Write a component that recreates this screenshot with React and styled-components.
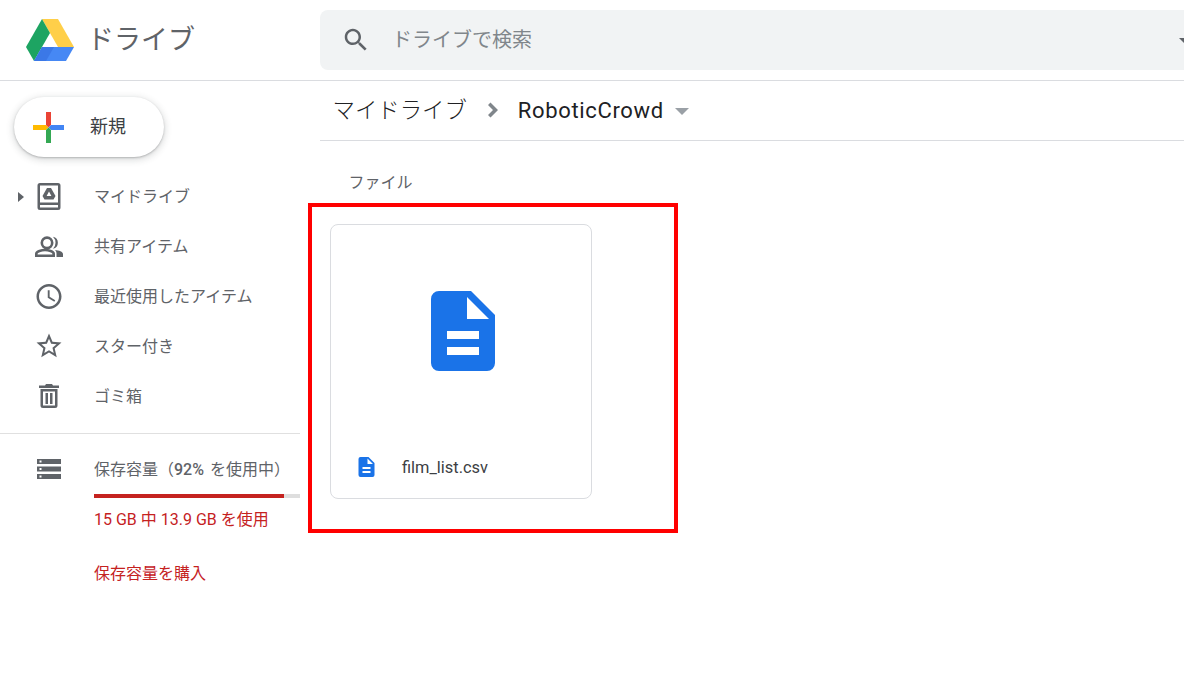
import React from "react";
import styled, { createGlobalStyle } from "styled-components";

const GlobalStyle = createGlobalStyle`
  html, body {
    margin: 0;
    height: 100%;
    background: #fff;
    overflow: hidden;
  }
  body {
    font-family: Roboto, "Noto Sans CJK JP", sans-serif;
    color: #5f6368;
  }
  * { box-sizing: border-box; }
`;

const Page = styled.div`
  width: 1184px;
  height: 674px;
  overflow: hidden;
  display: flex;
  flex-direction: column;
`;

const Header = styled.header`
  display: flex;
  height: 81px;
  flex: none;
  padding-top: 10px;
  border-bottom: 1px solid #dadce0;
`;

const Brand = styled.div`
  width: 320px;
  flex: none;
  display: flex;
  align-items: center;
  height: 60px;
  padding-left: 26px;
  gap: 13px;
`;

const BrandName = styled.span`
  font-size: 27px;
  font-weight: 400;
  color: #5f6368;
  margin-bottom: 5px;
`;

const SearchBar = styled.div`
  flex: 1;
  height: 60px;
  display: flex;
  align-items: center;
  padding-left: 21px;
  gap: 21px;
  background: #f1f3f4;
  border-radius: 8px 0 0 8px;
`;

const SearchHint = styled.span`
  font-size: 20px;
  font-weight: 400;
  color: #80868b;
  margin-bottom: 3px;
`;

const SearchCaret = styled.i`
  margin-left: auto;
  margin-right: -5px;
  width: 0;
  height: 0;
  border-left: 5px solid transparent;
  border-right: 5px solid transparent;
  border-top: 5px solid #5f6368;
`;

const Body = styled.div`
  flex: 1;
  display: flex;
  min-height: 0;
`;

const Sidebar = styled.aside`
  width: 320px;
  flex: none;
  display: flex;
  flex-direction: column;
  align-items: flex-start;
  padding-top: 16px;
`;

const NewButton = styled.button`
  margin-left: 14px;
  margin-bottom: 14px;
  width: 150px;
  height: 60px;
  border: 0;
  border-radius: 30px;
  background: #fff;
  box-shadow: 0 1px 2px 0 rgba(60, 64, 67, 0.3), 0 2px 6px 2px rgba(60, 64, 67, 0.15);
  display: flex;
  align-items: center;
  padding: 0 0 0 19px;
  gap: 26px;
  font-family: inherit;
  font-size: 18px;
  font-weight: 400;
  color: #3c4043;
`;

const NewLabel = styled.span`
  margin-bottom: 4px;
`;

const NavList = styled.nav`
  width: 300px;
`;

const NavRow = styled.div`
  height: 50px;
  display: flex;
  align-items: center;
  font-size: 16px;
  font-weight: 400;
  color: #5f6368;
`;

const NavLabel = styled.span`
  margin-bottom: 2px;
`;

const CaretSlot = styled.span`
  width: 34px;
  flex: none;
  padding-left: 18px;
  display: flex;
`;

const ExpandCaret = styled.i`
  width: 0;
  height: 0;
  margin-top: 2px;
  border-top: 5px solid transparent;
  border-bottom: 5px solid transparent;
  border-left: 6px solid #5f6368;
`;

const IconBox = styled.span`
  width: 30px;
  height: ${(p) => p.$height || 30}px;
  flex: none;
  margin-right: 30px;
  display: flex;
  align-items: center;
  justify-content: center;
`;

const Divider = styled.hr`
  width: 300px;
  height: 1px;
  margin: 12px 0 0;
  border: 0;
  background: #e0e0e0;
`;

const Storage = styled.div`
  width: 300px;
  padding: 25px 0 0 34px;
  display: flex;
`;

const StorageInfo = styled.div`
  flex: 1;
  display: flex;
  flex-direction: column;
`;

const StorageTitle = styled.div`
  font-size: 16px;
  line-height: 22px;
  font-weight: 400;
  color: #5f6368;
  white-space: nowrap;
  word-spacing: 2px;

  b {
    font-weight: 500;
  }
`;

const Track = styled.div`
  height: 4px;
  margin-top: 13px;
  background: #dedede;
`;

const TrackFill = styled.div`
  height: 100%;
  background: #c5221f;
`;

const RedText = styled.div`
  font-size: 16px;
  line-height: 20px;
  font-weight: 400;
  color: #c5221f;
  white-space: nowrap;
  margin-top: ${(p) => p.$top}px;
`;

const Main = styled.main`
  flex: 1;
  min-width: 0;
  display: flex;
  flex-direction: column;
  align-items: flex-start;
`;

const Breadcrumb = styled.div`
  align-self: stretch;
  height: 60px;
  flex: none;
  display: flex;
  align-items: center;
  padding: 0 0 1px 12.500px;
  border-bottom: 1px solid #dadce0;
`;

const CrumbRoot = styled.span`
  font-size: 22.4px;
  font-weight: 300;
  color: #202124;
  margin-bottom: 4px;
`;

const CrumbCurrent = styled.span`
  font-size: 22px;
  color: #202124;
  letter-spacing: 0.65px;
`;

const CrumbCaret = styled.i`
  width: 0;
  height: 0;
  margin-left: 11px;
  margin-top: 2px;
  border-left: 7px solid transparent;
  border-right: 7px solid transparent;
  border-top: 7px solid #9aa0a6;
`;

const SectionLabel = styled.div`
  margin: 32px 0 0 28.500px;
  font-size: 16px;
  line-height: 20px;
  font-weight: 400;
  color: #5f6368;
`;

const HighlightFrame = styled.section`
  width: 370px;
  height: 330px;
  margin: 10px 0 0 -12px;
  padding: 17px 0 0 18px;
  border: 4px solid #f00;
`;

const FileCard = styled.article`
  width: 262px;
  height: 275px;
  border: 1px solid #dadce0;
  border-radius: 8px;
  display: flex;
  flex-direction: column;
`;

const Preview = styled.div`
  flex: 1;
  display: flex;
  justify-content: center;
  padding: 66px 0 0 4px;
`;

const FileRow = styled.div`
  height: 60px;
  flex: none;
  display: flex;
  align-items: center;
  padding: 0 0 3px 27px;
  gap: 27px;
  font-size: 16.4px;
  color: #3c4043;
`;

const FileName = styled.span`
  margin-top: 2px;
`;

const ChevronSvg = styled.svg`
  width: 30px;
  height: 30px;
  margin: 0 10px 0 11px;
  fill: #80868b;
`;

const DocIcon = ({ width, height }) => (
  <svg width={width} height={height} viewBox="0 0 64 80">
    <path
      fillRule="evenodd"
      fill="#1a73e8"
      d="M8 0h32l24 24v48a8 8 0 0 1-8 8H8a8 8 0 0 1-8-8V8a8 8 0 0 1 8-8zM36 6v22h22zM16 40v8h32v-8zM16 56v8h32v-8z"
    />
  </svg>
);

const DriveLogo = () => (
  <svg width="48" height="42" viewBox="26 19 48 42">
    <path fill="#ffcf49" d="M42 19h16l16 28H58z" />
    <path fill="#1da462" d="M42 19l8 14-16 28-8-14z" />
    <path fill="#4688f4" d="M42 47h32l-8 14H34z" />
    <path fill="#3b78e7" d="M42 47l-8 14h12l8-14z" />
  </svg>
);

const PlusIcon = () => (
  <svg width="31" height="31" viewBox="0 0 31 31">
    <path fill="#ffba00" d="M0 13h13l2.500 2.500L13 18H0z" />
    <path fill="#ea4335" d="M13 0h5v13l-2.500 2.500L13 13z" />
    <path fill="#4285f4" d="M18 13h13v5H18l-2.500-2.500z" />
    <path fill="#34a853" d="M13 18l2.500-2.500L18 18v13h-5z" />
  </svg>
);

const SearchIcon = () => (
  <svg width="30" height="30" viewBox="0 0 24 24" fill="#5f6368">
    <path d="M15.500 14h-.79l-.28-.27C15.410 12.590 16 11.110 16 9.500 16 5.910 13.090 3 9.500 3S3 5.910 3 9.500 5.910 16 9.500 16c1.610 0 3.090-.59 4.230-1.570l.27.28v.79l5 4.990L20.490 19l-4.990-5zm-6 0C7.010 14 5 11.990 5 9.500S7.010 5 9.500 5 14 7.010 14 9.500 11.990 14 9.500 14z" />
  </svg>
);

const ChevronIcon = () => (
  <ChevronSvg viewBox="0 0 24 24">
    <path d="M10 6L8 8l4 4-4 4 2 2 6-6z" />
  </ChevronSvg>
);

const MyDriveIcon = () => (
  <svg width="24" height="27" viewBox="0 0 24 27" fill="#5f6368">
    <path
      fillRule="evenodd"
      d="M3 0h18a2.500 2.500 0 0 1 2.500 2.500v22A2.500 2.500 0 0 1 21 27H3a2.500 2.500 0 0 1-2.500-2.500v-22A2.500 2.500 0 0 1 3 0zM3 2.500v17h18v-17zM3 22v2.500h18V22z"
    />
    <path d="M10 5h4l4.500 8-2 3.500H7.500L5.500 13zM12 8.500L9.600 13h4.800z" fillRule="evenodd" />
  </svg>
);

const SharedIcon = () => (
  <svg width="28" height="21" viewBox="0 0 28 21" fill="#5f6368">
    <circle cx="12" cy="6.800" r="5.200" fill="none" stroke="#5f6368" strokeWidth="2.600" />
    <path
      fill="none"
      stroke="#5f6368"
      strokeWidth="2.600"
      d="M1.300 19.700v-2c0-2.500 5.500-3.700 8.700-3.700s8.700 1.200 8.700 3.700v2z"
    />
    <path d="M18 .7a6.200 6.200 0 0 1 0 12.100 8.500 8.500 0 0 0 0-12.100zM20 14.100c4 .4 8 1.800 8 3.900v3h-6.500v-3.400c0-1.400-.6-2.600-1.500-3.500z" />
  </svg>
);

const ClockIcon = () => (
  <svg width="31" height="31" viewBox="0 0 24 24" fill="#5f6368">
    <path d="M11.990 2C6.470 2 2 6.480 2 12s4.470 10 9.990 10C17.520 22 22 17.520 22 12S17.520 2 11.990 2zM12 20c-4.420 0-8-3.580-8-8s3.580-8 8-8 8 3.580 8 8-3.580 8-8 8z" />
    <path d="M12.500 7H11v6l5.250 3.150.75-1.230-4.500-2.670z" />
  </svg>
);

const StarIcon = () => (
  <svg width="30" height="30" viewBox="0 0 24 24" fill="#5f6368">
    <path d="M22 9.240l-7.190-.62L12 2 9.190 8.630 2 9.240l5.460 4.730L5.820 21 12 17.270 18.180 21l-1.630-7.030L22 9.240zM12 15.400l-3.760 2.270 1-4.280-3.320-2.880 4.380-.38L12 6.100l1.710 4.040 4.380.38-3.320 2.880 1 4.280L12 15.400z" />
  </svg>
);

const TrashIcon = () => (
  <svg width="20" height="24" viewBox="0 0 20 24" fill="#5f6368">
    <path d="M7 0h6l1 1.500h6v2.500H0V1.500h6z" />
    <path fillRule="evenodd" d="M1.500 5h17v16.500A2.500 2.500 0 0 1 16 24H4a2.500 2.500 0 0 1-2.500-2.500zM4 7.500v14h12v-14z" />
    <path d="M6.500 9h2.500v11H6.500zM11 9h2.500v11H11z" />
  </svg>
);

const StorageIcon = () => (
  <svg width="24" height="20" viewBox="0 0 24 20" fill="#5f6368">
    <path
      fillRule="evenodd"
      d="M0 0h24v5H0zM2.500 1.500v2h2v-2zM0 7.500h24v5H0zM2.500 9v2h2V9zM0 15h24v5H0zM2.500 16.500v2h2v-2z"
    />
  </svg>
);

const navItems = [
  { label: "マイドライブ", Icon: MyDriveIcon, expandable: true },
  { label: "共有アイテム", Icon: SharedIcon },
  { label: "最近使用したアイテム", Icon: ClockIcon },
  { label: "スター付き", Icon: StarIcon },
  { label: "ゴミ箱", Icon: TrashIcon },
];

export default function App() {
  return (
    <Page>
      <GlobalStyle />
      <Header>
        <Brand>
          <DriveLogo />
          <BrandName>ドライブ</BrandName>
        </Brand>
        <SearchBar>
          <SearchIcon />
          <SearchHint>ドライブで検索</SearchHint>
          <SearchCaret />
        </SearchBar>
      </Header>
      <Body>
        <Sidebar>
          <NewButton>
            <PlusIcon />
            <NewLabel>新規</NewLabel>
          </NewButton>
          <NavList>
            {navItems.map(({ label, Icon, expandable }) => (
              <NavRow key={label}>
                <CaretSlot>{expandable && <ExpandCaret />}</CaretSlot>
                <IconBox>
                  <Icon />
                </IconBox>
                <NavLabel>{label}</NavLabel>
              </NavRow>
            ))}
          </NavList>
          <Divider />
          <Storage>
            <IconBox $height={20}>
              <StorageIcon />
            </IconBox>
            <StorageInfo>
              <StorageTitle>
                保存容量（<b>92%</b> を使用中）
              </StorageTitle>
              <Track>
                <TrackFill style={{ width: "92%" }} />
              </Track>
              <RedText $top={12}>15 GB 中 13.9 GB を使用</RedText>
              <RedText $top={34}>保存容量を購入</RedText>
            </StorageInfo>
          </Storage>
        </Sidebar>
        <Main>
          <Breadcrumb>
            <CrumbRoot>マイドライブ</CrumbRoot>
            <ChevronIcon />
            <CrumbCurrent>RoboticCrowd</CrumbCurrent>
            <CrumbCaret />
          </Breadcrumb>
          <SectionLabel>ファイル</SectionLabel>
          <HighlightFrame>
            <FileCard>
              <Preview>
                <DocIcon width={64} height={80} />
              </Preview>
              <FileRow>
                <DocIcon width={17} height={20} />
                <FileName>film_list.csv</FileName>
              </FileRow>
            </FileCard>
          </HighlightFrame>
        </Main>
      </Body>
    </Page>
  );
}
